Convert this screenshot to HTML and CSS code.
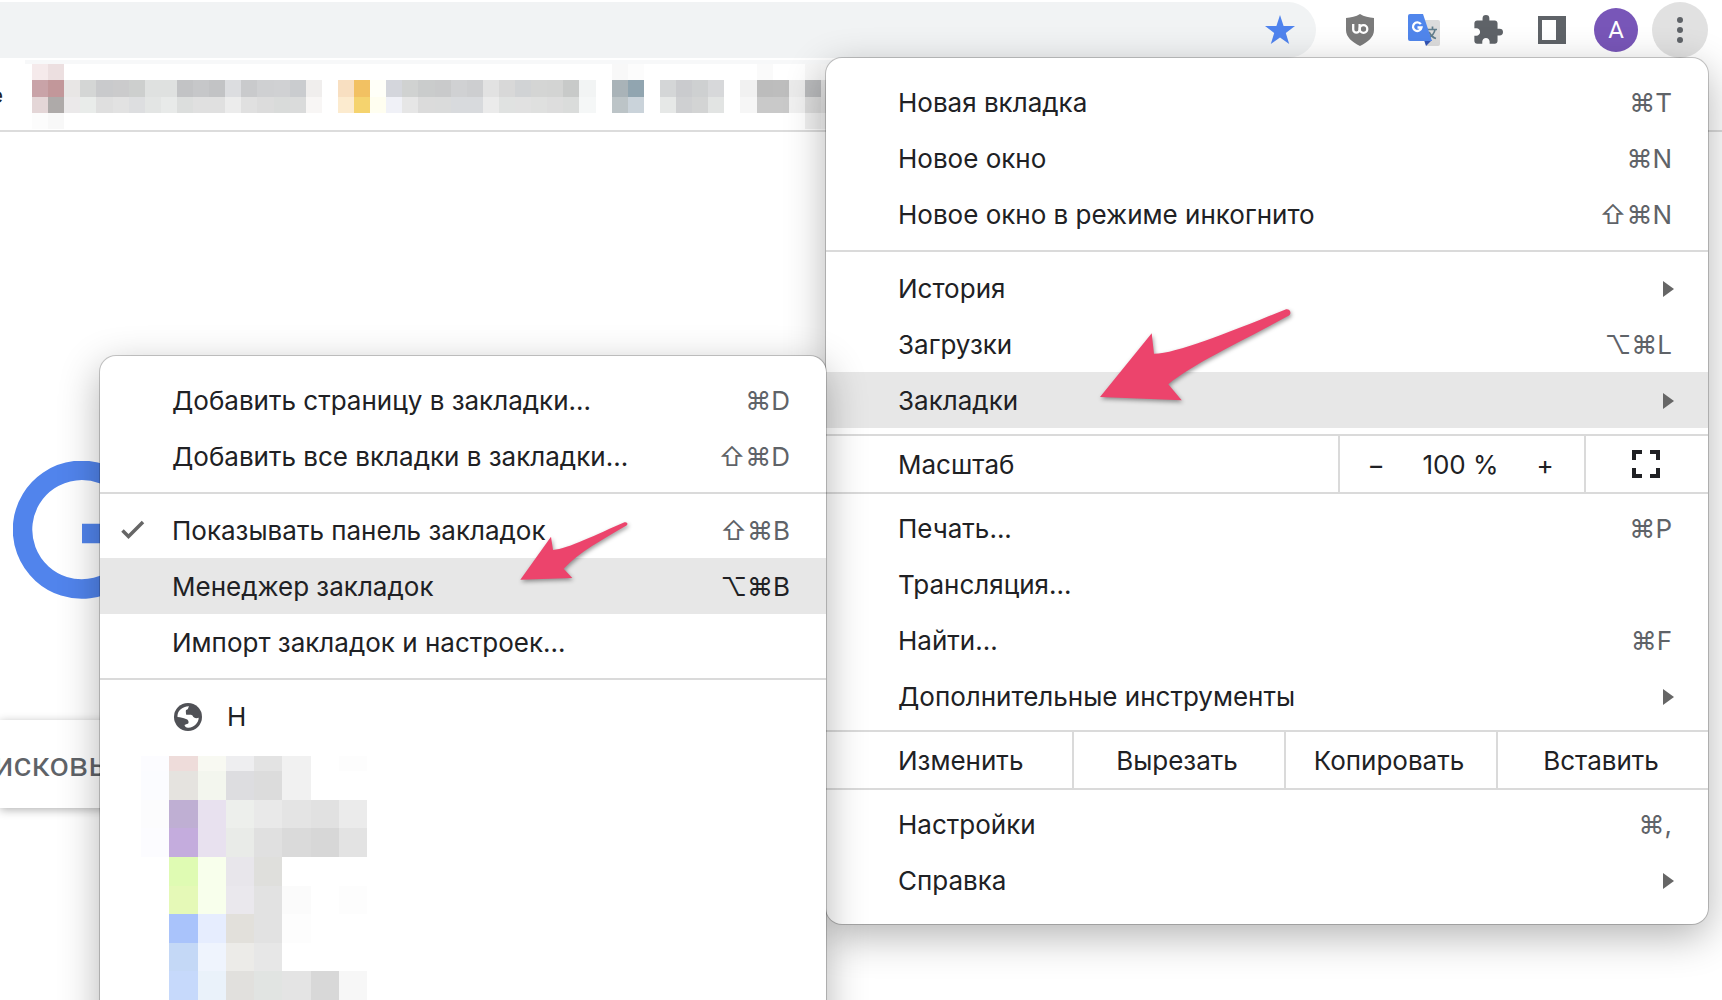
FILE: index.html
```html
<!DOCTYPE html>
<html lang="ru">
<head>
<meta charset="utf-8">
<title>Новая вкладка</title>
<link rel="stylesheet" href="styles.css">
</head>
<body>
<header class="toolbar">
  <div class="omnibox">
    <button class="star" aria-label="Закладка">
      <svg width="30" height="30" viewBox="0 0 30 30"><path fill="#4f83ee" d="M15 0l3.6 10.9L30 11l-9.200 7 3.400 11L15 22.500 5.800 29l3.400-11L0 11l11.400-.1z"/></svg>
    </button>
  </div>
  <div class="actions">
    <button class="action" aria-label="uBlock">
      <svg width="28" height="32" viewBox="0 0 28 32"><path fill="#7b7b7b" d="M14 0c4 2.800 9 3.500 14 4v12c0 7-6 12-14 16C6 28 0 23 0 16V4c5-.5 10-1.200 14-4z"/><path fill="none" stroke="#fff" stroke-width="2.300" d="M7.200 10v5.500a3.200 3.200 0 0 0 6.400 0V10"/><circle cx="17.500" cy="15" r="3.800" fill="none" stroke="#fff" stroke-width="2.300"/></svg>
    </button>
    <button class="action" aria-label="Переводчик">
      <svg width="32" height="32" viewBox="0 0 32 32"><path fill="#dcdcdc" d="M16 6h14a2 2 0 0 1 2 2v22a2 2 0 0 1-2 2H18z"/><path fill="none" stroke="#607d8b" stroke-width="1.700" d="M19 15.500h10M24.500 12.500v3M27 15.500c-.5 4-3.500 7-7.500 9M21 18c1.500 3 4 5.500 7 6.500"/><path fill="#3153b3" d="M16 26h8l-6 6z"/><path fill="#5086ec" d="M2 0h13l9 27H2a2 2 0 0 1-2-2V2a2 2 0 0 1 2-2z"/><path fill="none" stroke="#fff" stroke-width="2.300" d="M12.800 10.200A4.300 4.300 0 1 0 13.500 13.500H9.500"/></svg>
    </button>
    <button class="action" aria-label="Расширения">
      <svg width="30" height="30" viewBox="1 1 22 22"><path fill="#5f6368" d="M20.500 11H19V7c0-1.100-.9-2-2-2h-4V3.500a2.500 2.500 0 0 0-5 0V5H4c-1.100 0-1.990.9-1.990 2v3.800H3.500c1.490 0 2.700 1.210 2.700 2.700s-1.210 2.700-2.700 2.700H2V20c0 1.100.9 2 2 2h3.800v-1.500c0-1.490 1.210-2.700 2.700-2.700s2.700 1.210 2.700 2.700V22H17c1.100 0 2-.9 2-2v-4h1.500a2.500 2.500 0 0 0 0-5z"/></svg>
    </button>
    <button class="action" aria-label="Боковая панель">
      <svg width="28" height="28" viewBox="0 0 28 28"><path fill="#5f6368" fill-rule="evenodd" d="M0 0h28v28H0zM4 4v20h14V4z"/></svg>
    </button>
    <button class="action" aria-label="Профиль"><span class="avatar">A</span></button>
    <button class="action action-open" aria-label="Меню">
      <svg width="6" height="26" viewBox="0 0 6 26" fill="#5f6368"><circle cx="3" cy="3" r="3"/><circle cx="3" cy="13" r="3"/><circle cx="3" cy="23" r="3"/></svg>
    </button>
  </div>
</header>

<div class="bookmarks">
  <span class="cut-label">е</span>
  <svg class="mosaic bookmark-mosaic" viewBox="0 0 50 4" preserveAspectRatio="none">
    <g><rect x="0" fill="#f5eaeb"/><rect x="1" fill="#ecdfe0"/><rect x="36" fill="#f8f8f8"/><rect x="37" fill="#fcfcfc"/><rect x="45" fill="#fafafa"/><rect x="48" fill="#f8f8f8"/><rect x="49" fill="#fafafa"/></g>
    <g transform="translate(0 1)">
      <rect x="0" fill="#c9a3a8"/><rect x="1" fill="#c2979a"/><rect x="2" fill="#e8e6e5"/><rect x="3" fill="#d4d6d5"/><rect x="4" fill="#c9cacc"/><rect x="5" fill="#cbcbcc"/><rect x="6" fill="#cdcfce"/><rect x="7" fill="#dfe1e0"/><rect x="8" fill="#dfe1e0"/><rect x="9" fill="#c2c3c5"/>
      <rect x="10" fill="#c6c7c9"/><rect x="11" fill="#c2c3c5"/><rect x="12" fill="#dcdde0"/><rect x="13" fill="#c9cacc"/><rect x="14" fill="#cfd0d2"/><rect x="15" fill="#d0d1d3"/><rect x="16" fill="#cacccf"/><rect x="17" fill="#f0eeed"/><rect x="19" fill="#f8dfc1"/>
      <rect x="20" fill="#f2c162"/><rect x="21" fill="#fffff8"/><rect x="22" fill="#d4d6dc"/><rect x="23" fill="#d0d2d1"/><rect x="24" fill="#cacccc"/><rect x="25" fill="#c9cacb"/><rect x="26" fill="#d0d1d3"/><rect x="27" fill="#cdced0"/><rect x="28" fill="#e2e2e2"/><rect x="29" fill="#d8d8d8"/>
      <rect x="30" fill="#d1d3d5"/><rect x="31" fill="#d4d5d4"/><rect x="32" fill="#d3d4d3"/><rect x="33" fill="#c8cac9"/><rect x="34" fill="#f2f4f4"/><rect x="36" fill="#a9b3b8"/><rect x="37" fill="#91a5b0"/><rect x="39" fill="#d4d6d7"/>
      <rect x="40" fill="#cacbce"/><rect x="41" fill="#ced0d1"/><rect x="42" fill="#d7d8da"/><rect x="44" fill="#f1f1f1"/><rect x="45" fill="#bcbcbc"/><rect x="46" fill="#bdbdbd"/><rect x="47" fill="#ebebeb"/><rect x="48" fill="#b9babc"/><rect x="49" fill="#e4e4e4"/>
    </g>
    <g transform="translate(0 2)">
      <rect x="0" fill="#e4d6d7"/><rect x="1" fill="#aeaaa9"/><rect x="2" fill="#ebe9ea"/><rect x="3" fill="#e9ecea"/><rect x="4" fill="#dfdfdf"/><rect x="5" fill="#e2e2e2"/><rect x="6" fill="#dddee0"/><rect x="7" fill="#e3e5e4"/><rect x="8" fill="#e8eae9"/><rect x="9" fill="#dcdedd"/>
      <rect x="10" fill="#e0e0e0"/><rect x="11" fill="#e0e0e0"/><rect x="12" fill="#ececec"/><rect x="13" fill="#e0e0e0"/><rect x="14" fill="#dcdcdc"/><rect x="15" fill="#d9dbda"/><rect x="16" fill="#dadbdb"/><rect x="17" fill="#f8f6f5"/><rect x="19" fill="#fcebcf"/>
      <rect x="20" fill="#f5d36e"/><rect x="21" fill="#fffef0"/><rect x="22" fill="#f0f1f7"/><rect x="23" fill="#e6e6e6"/><rect x="24" fill="#dbdbdb"/><rect x="25" fill="#dadbdb"/><rect x="26" fill="#d8dadd"/><rect x="27" fill="#d8dadd"/><rect x="28" fill="#ebebeb"/><rect x="29" fill="#e0e2e1"/>
      <rect x="30" fill="#e1e1e1"/><rect x="31" fill="#dfe0df"/><rect x="32" fill="#dddddd"/><rect x="33" fill="#dadcdb"/><rect x="34" fill="#f5f7f7"/><rect x="36" fill="#bcc4c7"/><rect x="37" fill="#cad3da"/><rect x="39" fill="#e6e8e7"/>
      <rect x="40" fill="#cfd0d2"/><rect x="41" fill="#d3d4d4"/><rect x="42" fill="#e2e4e3"/><rect x="44" fill="#f6f6f6"/><rect x="45" fill="#c9c9c9"/><rect x="46" fill="#c9c9c9"/><rect x="47" fill="#f1f1f1"/><rect x="48" fill="#dcdcdc"/><rect x="49" fill="#e4e4e4"/>
    </g>
    <g transform="translate(0 3)"><rect x="0" fill="#fcfcfc"/><rect x="1" fill="#f8f8f8"/><rect x="48" fill="#f0f0f0"/><rect x="49" fill="#f4f4f4"/></g>
  </svg>
</div>

<main class="page">
  <svg class="logo" width="140" height="138" viewBox="0 0 140 138"><path fill="none" stroke="#5184ec" stroke-width="19.500" d="M111 27A59.300 59.300 0 1 0 128 72.500H69"/></svg>
  <input class="search" type="search" placeholder="исковы" aria-label="Поиск">
</main>

<nav class="menu main-menu" aria-label="Меню браузера">
  <div class="group group-first">
    <button class="item">Новая вкладка<kbd>⌘T</kbd></button>
    <button class="item">Новое окно<kbd>⌘N</kbd></button>
    <button class="item">Новое окно в режиме инкогнито<kbd>⇧⌘N</kbd></button>
  </div>
  <div class="group group-ruled">
    <button class="item">История<span class="caret"></span></button>
    <button class="item">Загрузки<kbd>⌥⌘L</kbd></button>
    <button class="item item-active">Закладки<span class="caret"></span>
      <svg class="pointer pointer-large" width="204" height="104" viewBox="1094 302 204 104"><path d="M1100 397L1151.700 333.300 1154 353.700C1176 354 1232 331 1285.500 309.500 1290 308.500 1292 313 1289 315.500 1243 341 1194 363 1168.300 384.300L1181.700 400.300z"/></svg>
    </button>
  </div>
  <div class="strip">
    <span class="strip-label">Масштаб</span>
    <div class="zoom">
      <button class="zoom-step" aria-label="Уменьшить">−</button>
      <output class="zoom-value">100 %</output>
      <button class="zoom-step" aria-label="Увеличить">+</button>
    </div>
    <button class="fullscreen" aria-label="Во весь экран">
      <svg width="28" height="28" viewBox="0 0 28 28"><path fill="none" stroke="#202124" stroke-width="4" d="M2 10V2h8M18 2h8v8M26 18v8h-8M10 26H2v-8"/></svg>
    </button>
  </div>
  <div class="group">
    <button class="item">Печать...<kbd>⌘P</kbd></button>
    <button class="item">Трансляция...</button>
    <button class="item">Найти...<kbd>⌘F</kbd></button>
    <button class="item">Дополнительные инструменты<span class="caret"></span></button>
  </div>
  <div class="strip">
    <span class="strip-label">Изменить</span>
    <button class="edit">Вырезать</button>
    <button class="edit">Копировать</button>
    <button class="edit">Вставить</button>
  </div>
  <div class="group group-last">
    <button class="item">Настройки<kbd>⌘,</kbd></button>
    <button class="item">Справка<span class="caret"></span></button>
  </div>

  <div class="menu submenu">
    <div class="group group-first">
      <button class="item">Добавить страницу в закладки...<kbd>⌘D</kbd></button>
      <button class="item">Добавить все вкладки в закладки...<kbd>⇧⌘D</kbd></button>
    </div>
    <div class="group group-ruled">
      <button class="item"><svg class="check" width="24" height="20" viewBox="0 0 24 20"><path fill="none" stroke="#666" stroke-width="3.500" d="M1.500 10.500l6 6L22 2"/></svg>Показывать панель закладок<kbd>⇧⌘B</kbd></button>
      <button class="item item-active">Менеджер закладок<kbd>⌥⌘B</kbd>
        <svg class="pointer pointer-small" width="118" height="72" viewBox="514 514 118 72"><path d="M520.300 579.700L551 536.700 553 550C568 549 597 534 624.500 522.300 627 521.500 628.500 524 626.500 525.500 602 540 579 552 563.700 568.700L572.300 578z"/></svg>
      </button>
      <button class="item">Импорт закладок и настроек...</button>
    </div>
    <div class="group group-ruled group-sites">
      <button class="item item-site"><svg width="28" height="28" viewBox="0 0 28 28"><circle cx="14" cy="14" r="14" fill="#505156"/><path fill="#fff" d="M3.500 14C3 8 8 3.500 15 3.200c-1 1.800-.5 3.300-3 3.800-.5 1.500.2 3 0 4.500 1.500.8 4.500-.3 6.500 1 1 2.500 3.500 3.200 6.200 2.300C24.500 20 20 25 14 24.700c-2-.2-3.200-1-3.500-2.700 1.500-1.200 3.500-.5 4-2 .3-2-.5-3.500-2.500-4-2.800-.8-5-2-8.500-2z"/></svg>Н</button>
      <svg class="mosaic site-mosaic" viewBox="0 .47 8 8.530" preserveAspectRatio="none">
        <g><rect x="0" fill="#fcfcff"/><rect x="1" fill="#eedcda"/><rect x="2" fill="#f8f9f2"/><rect x="3" fill="#eeeef0"/><rect x="4" fill="#e3e3e3"/><rect x="5" fill="#f1f1f1"/><rect x="7" fill="#fdfdfd"/></g>
        <g transform="translate(0 1)"><rect x="0" fill="#fbfcff"/><rect x="1" fill="#e5e3df"/><rect x="2" fill="#f3f6ee"/><rect x="3" fill="#dddde0"/><rect x="4" fill="#dcdcdc"/><rect x="5" fill="#f1f1f1"/></g>
        <g transform="translate(0 2)"><rect x="0" fill="#fcfcfd"/><rect x="1" fill="#bfafd3"/><rect x="2" fill="#e8e1ef"/><rect x="3" fill="#edefec"/><rect x="4" fill="#e9e9e9"/><rect x="5" fill="#e4e4e4"/><rect x="6" fill="#e1e1e1"/><rect x="7" fill="#ebebeb"/></g>
        <g transform="translate(0 3)"><rect x="0" fill="#fcfcff"/><rect x="1" fill="#c4acdd"/><rect x="2" fill="#e8e1ef"/><rect x="3" fill="#e9ebe8"/><rect x="4" fill="#e0e0e0"/><rect x="5" fill="#dadada"/><rect x="6" fill="#d7d7d7"/><rect x="7" fill="#e3e3e3"/></g>
        <g transform="translate(0 4)"><rect x="1" fill="#dffbb3"/><rect x="2" fill="#f8ffec"/><rect x="3" fill="#e8e6eb"/><rect x="4" fill="#dfdfdc"/></g>
        <g transform="translate(0 5)"><rect x="1" fill="#e5f9b7"/><rect x="2" fill="#f8ffec"/><rect x="3" fill="#eae8ed"/><rect x="4" fill="#e2e2e2"/><rect x="5" fill="#fbfbfb"/><rect x="7" fill="#fdfdfd"/></g>
        <g transform="translate(0 6)"><rect x="1" fill="#a9c3fb"/><rect x="2" fill="#e6edfe"/><rect x="3" fill="#e2e0db"/><rect x="4" fill="#e2e2e2"/><rect x="5" fill="#fdfdfd"/></g>
        <g transform="translate(0 7)"><rect x="1" fill="#c4d8f6"/><rect x="2" fill="#eff4fd"/><rect x="3" fill="#ecebe8"/><rect x="4" fill="#e7e7e7"/></g>
        <g transform="translate(0 8)"><rect x="1" fill="#c6d9fb"/><rect x="2" fill="#eaf2fa"/><rect x="3" fill="#e1e0dd"/><rect x="4" fill="#e1e4e2"/><rect x="5" fill="#e4e4e4"/><rect x="6" fill="#d8d8d8"/><rect x="7" fill="#f7f7f7"/></g>
      </svg>
    </div>
  </div>
</nav>
</body>
</html>
```

FILE: styles.css
```css
* { box-sizing: border-box; }

body {
  margin: 0;
  position: relative;
  height: 100vh;
  overflow: hidden;
  background: #fff;
  color: #202124;
  font: 26px/32px Inter, "Liberation Sans", sans-serif;
}

button {
  margin: 0;
  padding: 0;
  border: 0;
  background: none;
  color: inherit;
  font: inherit;
}

svg { display: block; flex: none; }

/* Toolbar */
.toolbar {
  display: flex;
  gap: 16px;
  padding: 2px 14px 0 0;
}

.omnibox {
  flex: 1;
  display: flex;
  align-items: center;
  justify-content: flex-end;
  height: 56px;
  padding-right: 21px;
  border-radius: 0 28px 28px 0;
  background: #f1f3f4;
}

.actions { display: flex; gap: 8px; }

.action {
  display: flex;
  align-items: center;
  justify-content: center;
  width: 56px;
  height: 56px;
  border-radius: 50%;
}

.action-open { background: #e1e1e1; }

.avatar {
  width: 44px;
  height: 44px;
  border-radius: 50%;
  background: #7856b8;
  color: #fff;
  font: 24px/44px Roboto, sans-serif;
}

/* Bookmarks bar */
.bookmarks {
  display: flex;
  gap: 22px;
  padding-top: 2px;
  height: 74px;
  border-bottom: 2px solid #dcdcdc;
}

.cut-label {
  display: flex;
  justify-content: flex-end;
  align-items: center;
  width: 3px;
  overflow: hidden;
  font-size: 22px;
}

.mosaic rect { width: 1px; height: 1px; shape-rendering: crispEdges; }

.bookmark-mosaic {
  width: 812px;
  height: 69px;
  padding-left: 7px;
  border-top: 4px solid #f7f8f9;
}

/* Page */
.page { padding: 329px 0 0; }

.logo { margin-left: 13px; }

.search {
  display: block;
  width: 60%;
  height: 88px;
  margin: 121px 0 0;
  padding: 0;
  border: 0;
  border-radius: 0 44px 44px 0;
  background: #fff;
  box-shadow: 0 2px 10px rgba(0, 0, 0, .3);
  font: 34px/40px Roboto, sans-serif;
  text-indent: -6px;
}

.search::placeholder { color: #5f6368; opacity: 1; }

/* Menus */
.menu {
  position: absolute;
  border-radius: 16px;
  background: #fff;
  box-shadow: 0 0 0 1px rgba(0, 0, 0, .2), 0 12px 40px rgba(0, 0, 0, .3);
}

.main-menu { top: 58px; right: 14px; width: 882px; }

.submenu { top: 298px; right: 100%; width: 726px; }

.group { padding: 6px 0; }
.group-first { padding: 16px 0 8px; }
.group-last { padding-bottom: 16px; }
.group-ruled { padding-top: 8px; border-top: 2px solid #dadada; }
.submenu .group-ruled { padding-bottom: 8px; }
.submenu .group-sites { padding-bottom: 56px; }

.item {
  position: relative;
  display: flex;
  align-items: center;
  width: 100%;
  height: 56px;
  padding: 2px 36px 0 72px;
  text-align: left;
  white-space: pre;
}

.item-active { background: #e7e7e7; }

.item kbd {
  margin-left: auto;
  color: #5f6368;
  font: inherit;
}

.item-active kbd { color: inherit; }

.caret {
  margin: 0 -2px 0 auto;
  border: solid transparent;
  border-width: 8px 0 8px 11px;
  border-left-color: #666;
}

.check { position: absolute; left: 21px; top: 18px; }

.item-site { gap: 25px; padding-left: 74px; }

.site-mosaic { width: 226px; height: 244px; margin: 12px 0 0 41px; }

.strip {
  display: flex;
  height: 60px;
  border: solid #dadada;
  border-width: 2px 0;
}

.strip-label { flex: 1; padding: 13px 0 0 72px; }

.zoom {
  display: flex;
  align-items: center;
  justify-content: space-between;
  width: 248px;
  padding: 2px 21px 0 18px;
  border: solid #dadada;
  border-width: 0 2px;
}

.zoom-step { width: 36px; }

.fullscreen {
  display: flex;
  align-items: center;
  justify-content: center;
  width: 122px;
  padding-right: 2px;
}

.edit { width: 212px; padding: 2px 4px 0 0; border-left: 2px solid #dadada; }

/* Arrows laid over the menus */
.pointer {
  position: absolute;
  z-index: 1;
  fill: #ec446c;
  filter: drop-shadow(1px 2px 2px rgba(0, 0, 0, .4));
}

.pointer-large { left: 268px; top: -70px; }
.pointer-small { left: 414px; top: -44px; }
```
